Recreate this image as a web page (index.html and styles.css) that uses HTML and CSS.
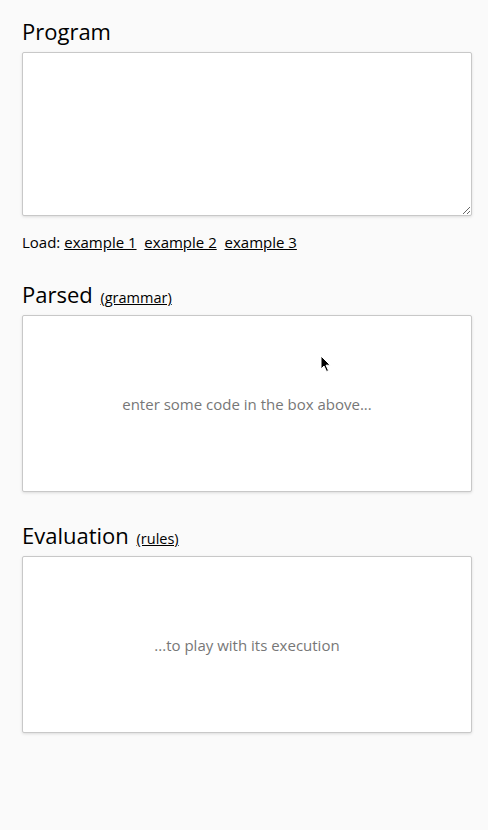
FILE: index.html
```html
<!DOCTYPE html>
<html>
<head>
<meta charset="utf-8">
<link rel="stylesheet" href="styles.css">
</head>
<body>
<main class="page">
  <section class="section">
    <h2 class="title">Program</h2>
    <textarea class="editor"></textarea>
    <p class="load">Load: <a href="#">example 1</a>&nbsp; <a href="#">example 2</a>&nbsp; <a href="#">example 3</a></p>
  </section>
  <section class="section">
    <h2 class="title">Parsed <a class="aside" href="#">(grammar)</a></h2>
    <div class="panel">
      <span class="hint">enter some code in the box above...</span>
      <svg class="cursor" width="12" height="18" viewBox="0 0 12 18"><path d="M1 1 L1 14 L4 11 L6.5 16.5 L8.5 15.6 L6 10.2 L10.2 10.2 Z" fill="#000" stroke="#fff" stroke-width="1"/></svg>
    </div>
  </section>
  <section class="section">
    <h2 class="title">Evaluation <a class="aside" href="#">(rules)</a></h2>
    <div class="panel">
      <span class="hint">...to play with its execution</span>
    </div>
  </section>
</main>
</body>
</html>
```
FILE: styles.css
```css
html, body {
  margin: 0;
  padding: 0;
  background: #fafafa;
}
body {
  font-family: "Open Sans", "Liberation Sans", sans-serif;
  color: #000;
}
.page {
  padding: 17px 16px 0 22px;
}
.section {
  display: flex;
  flex-direction: column;
}
.title {
  margin: 0 0 7px;
  font-size: 22px;
  font-weight: 400;
  line-height: 28px;
}
.aside {
  font-size: 14.5px;
  line-height: 0;
  margin-left: 2px;
  color: #000;
}
.editor {
  box-sizing: border-box;
  height: 164px;
  width: 100%;
  margin: 0;
  background: #fff;
  border: 1px solid #c8c8c8;
  border-radius: 2px;
  box-shadow: 0 1px 3px rgba(0,0,0,0.12);
  resize: vertical;
  font: inherit;
  outline: none;
  display: block;
}
.load {
  margin: 16px 0 28px;
  font-size: 15px;
  line-height: 20px;
}
.load a {
  color: #000;
}
.panel {
  position: relative;
  box-sizing: border-box;
  height: 177px;
  background: #fff;
  border: 1px solid #c8c8c8;
  border-radius: 2px;
  box-shadow: 0 1px 3px rgba(0,0,0,0.12);
  display: flex;
  align-items: center;
  justify-content: center;
  margin-bottom: 29px;
}
.hint {
  font-size: 15px;
  color: #777;
}
.cursor {
  position: absolute;
  left: 297px;
  top: 39px;
}
```
